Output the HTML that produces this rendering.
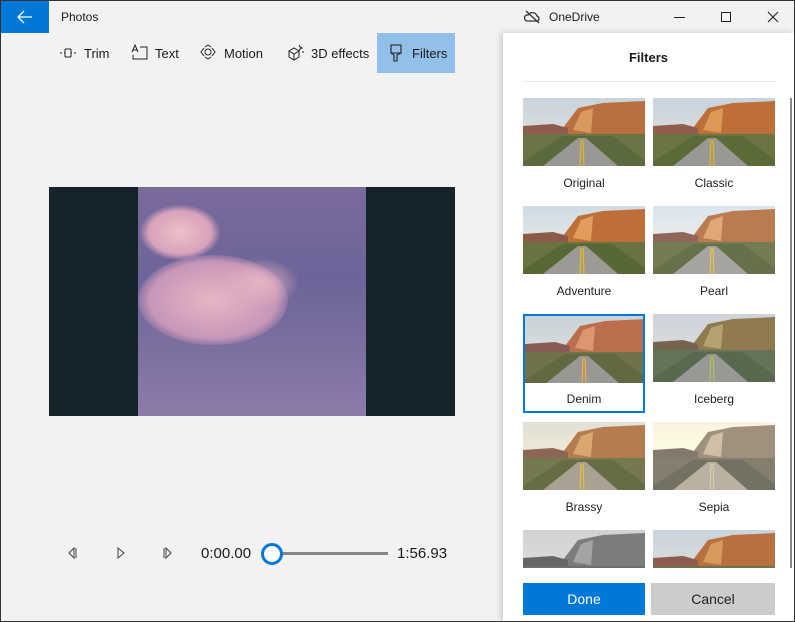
<!DOCTYPE html>
<html><head><style>
*{margin:0;padding:0;box-sizing:border-box}
body{width:795px;height:622px;overflow:hidden;background:#f2f2f2;font-family:"Liberation Sans",sans-serif;font-size:13px;color:#1a1a1a;position:relative}
.abs{position:absolute}
.thumb{position:absolute;width:122px;height:68px;overflow:hidden}
.lbl{position:absolute;width:122px;text-align:center;font-size:12px;color:#222}
</style></head><body>
<div class="abs" style="left:0;top:0;width:795px;height:622px;border:1px solid #333;z-index:9;pointer-events:none"></div>
<div class="abs" style="left:0;top:0;width:49px;height:33px;background:#0078d7"></div>
<svg class="abs" style="left:17px;top:10px" width="16" height="14"><path d="M1 7H15M1 7L7 1M1 7L7 13" stroke="#fff" stroke-width="1.3" fill="none"/></svg>
<div class="abs" style="left:61px;top:10px;font-size:12px">Photos</div>
<svg class="abs" style="left:524px;top:10px" width="18" height="14"><path d="M3 11a3 3 0 0 1 1-6a5 5 0 0 1 9 1a3 3 0 0 1 1 5z" stroke="#333" stroke-width="1.3" fill="none"/><path d="M2 1L15 13" stroke="#333" stroke-width="1.3"/></svg>
<div class="abs" style="left:549px;top:10px;font-size:12px">OneDrive</div>
<div class="abs" style="left:674px;top:17px;width:11px;height:1px;background:#222"></div>
<div class="abs" style="left:721px;top:12px;width:10px;height:10px;border:1px solid #222"></div>
<svg class="abs" style="left:767px;top:11px" width="12" height="12"><path d="M1 1L11 11M11 1L1 11" stroke="#222" stroke-width="1.1"/></svg>
<!-- toolbar -->
<svg class="abs" style="left:59px;top:46px" width="18" height="14"><path d="M1 7h2M5 7h1M12 7h1M15 7h2M6 3v8M12 3v8M6 3h6M6 11h6" stroke="#222" stroke-width="1" fill="none"/></svg>
<div class="abs" style="left:84px;top:46px">Trim</div>
<svg class="abs" style="left:131px;top:44px" width="18" height="16"><path d="M1 8L4 1L7 8M2 6h4M9 3h7v12H2v-4" stroke="#222" stroke-width="1" fill="none"/></svg>
<div class="abs" style="left:155px;top:46px">Text</div>
<svg class="abs" style="left:200px;top:44px" width="16" height="16"><circle cx="8" cy="8" r="3" stroke="#222" fill="none"/><path d="M4 4L1 8L4 12M12 4L15 8L12 12M5 3L8 1L11 3M5 13L8 15L11 13" stroke="#222" fill="none"/></svg>
<div class="abs" style="left:224px;top:46px">Motion</div>
<svg class="abs" style="left:287px;top:43px" width="18" height="18"><path d="M2 8l5-3l5 3v6l-5 3l-5-3zM2 8l5 3l5-3M7 11v6" stroke="#222" fill="none"/><path d="M12 2l1 2l2 1l-2 1l-1 2M15 9h2" stroke="#222" fill="none"/></svg>
<div class="abs" style="left:311px;top:46px">3D effects</div>
<div class="abs" style="left:377px;top:33px;width:78px;height:40px;background:#92c0e8"></div>
<svg class="abs" style="left:389px;top:44px" width="14" height="18"><path d="M2 1h10v8H2zM2 9l3 2v6h3v-6l4-2" stroke="#222" stroke-width="1.1" fill="none"/></svg>
<div class="abs" style="left:412px;top:46px">Filters</div>
<!-- video -->
<div class="abs" style="left:49px;top:187px;width:406px;height:229px;background:#15242a"></div>
<div class="abs" style="left:138px;top:187px;width:228px;height:229px;background:linear-gradient(180deg,#7b6a9c 0%,#6c6499 40%,#8c7ba8 100%)"></div>
<div class="abs" style="left:138px;top:255px;width:150px;height:90px;border-radius:50%;background:radial-gradient(ellipse at 50% 50%,#e8b6c4,#c896b8 60%,rgba(160,120,170,0) 75%)"></div>
<div class="abs" style="left:140px;top:205px;width:80px;height:55px;border-radius:50%;background:radial-gradient(ellipse,#efc0c8,#d8a2bb 55%,rgba(150,120,170,0) 72%)"></div>
<div class="abs" style="left:220px;top:258px;width:80px;height:50px;border-radius:50%;background:radial-gradient(ellipse,#e6b4c2,rgba(150,120,170,0) 70%)"></div>
<!-- controls -->
<svg class="abs" style="left:66px;top:546px" width="12" height="14"><path d="M8 2L3 7L8 12zM10 2v10" stroke="#444" fill="none"/></svg>
<svg class="abs" style="left:116px;top:546px" width="10" height="14"><path d="M2 2L8 7L2 12z" stroke="#444" fill="none"/></svg>
<svg class="abs" style="left:162px;top:546px" width="12" height="14"><path d="M2 2v10M4 2L9 7L4 12z" stroke="#444" fill="none"/></svg>
<div class="abs" style="left:201px;top:545px;font-size:15px">0:00.00</div>
<div class="abs" style="left:270px;top:552px;width:118px;height:3px;background:#858585"></div>
<div class="abs" style="left:261px;top:543px;width:22px;height:22px;border-radius:50%;border:3px solid #0078d7;background:#fff"></div>
<div class="abs" style="left:397px;top:545px;font-size:15px">1:56.93</div>
<!-- panel -->
<div class="abs" style="left:503px;top:33px;width:291px;height:588px;background:#fff;box-shadow:-2px 0 6px rgba(0,0,0,.18)"></div>
<div class="abs" style="left:503px;top:50px;width:291px;text-align:center;font-weight:bold;font-size:13px">Filters</div>
<div class="abs" style="left:523px;top:81px;width:252px;height:1px;background:#e8e8e8"></div>
<div class="abs" style="left:790px;top:98px;width:2px;height:470px;background:#888"></div>
<svg width="0" height="0" style="position:absolute"><defs>
<linearGradient id="sk" x1="0" y1="0" x2="0" y2="1"><stop offset="0" stop-color="#c9d3dc"/><stop offset="1" stop-color="#e6e4dc"/></linearGradient>
<g id="sc"><rect width="122" height="68" fill="url(#sk)"/><path d="M40 30L55 10L80 5L122 3V45H40z" fill="#b8703e"/><path d="M50 32L58 14L70 10L68 35z" fill="#d99a60"/><path d="M0 28L30 26L45 30V38H0z" fill="#8c5d4e"/><rect y="36" width="122" height="32" fill="#6b7446"/><path d="M40 38L90 38L122 62V68H0V64z" fill="#5b6a3c"/><path d="M55 40h8L95 68H20z" fill="#9a9894"/><path d="M58 42L57 68M60 42L61 68" stroke="#e0b22a" stroke-width="1.3"/></g>
</defs></svg>
<div class="thumb" style="left:523px;top:98px"><svg width="122" height="68"><use href="#sc"/></svg></div>
<div class="thumb" style="left:653px;top:98px;filter:saturate(1.1)"><svg width="122" height="68"><use href="#sc"/></svg></div>
<div class="lbl" style="left:523px;top:176px">Original</div><div class="lbl" style="left:653px;top:176px">Classic</div>
<div class="thumb" style="left:523px;top:206px;filter:contrast(1.1)"><svg width="122" height="68"><use href="#sc"/></svg></div>
<div class="thumb" style="left:653px;top:206px;filter:brightness(1.08) saturate(.8)"><svg width="122" height="68"><use href="#sc"/></svg></div>
<div class="lbl" style="left:523px;top:284px">Adventure</div><div class="lbl" style="left:653px;top:284px">Pearl</div>
<div class="abs" style="left:523px;top:314px;width:122px;height:99px;border:2px solid #0078d7"></div>
<div class="thumb" style="left:525px;top:316px;width:118px;height:67px;filter:hue-rotate(-10deg) saturate(.9)"><svg width="122" height="68"><use href="#sc"/></svg></div>
<div class="thumb" style="left:653px;top:314px;filter:hue-rotate(20deg) saturate(.6)"><svg width="122" height="68"><use href="#sc"/></svg></div>
<div class="lbl" style="left:523px;top:392px">Denim</div><div class="lbl" style="left:653px;top:392px">Iceberg</div>
<div class="thumb" style="left:523px;top:422px;filter:sepia(.3)"><svg width="122" height="68"><use href="#sc"/></svg></div>
<div class="thumb" style="left:653px;top:422px;filter:sepia(.8) saturate(.5)"><svg width="122" height="68"><use href="#sc"/></svg></div>
<div class="lbl" style="left:523px;top:500px">Brassy</div><div class="lbl" style="left:653px;top:500px">Sepia</div>
<div class="thumb" style="left:523px;top:530px;height:38px;filter:grayscale(1)"><svg width="122" height="68"><use href="#sc"/></svg></div>
<div class="thumb" style="left:653px;top:530px;height:38px"><svg width="122" height="68"><use href="#sc"/></svg></div>
<div class="abs" style="left:503px;top:568px;width:291px;height:53px;background:#fff"></div>
<div class="abs" style="left:523px;top:583px;width:122px;height:32px;background:#0078d7;color:#fff;text-align:center;line-height:32px;font-size:14px">Done</div>
<div class="abs" style="left:651px;top:583px;width:124px;height:32px;background:#ccc;color:#222;text-align:center;line-height:32px;font-size:14px">Cancel</div>
</body></html>
